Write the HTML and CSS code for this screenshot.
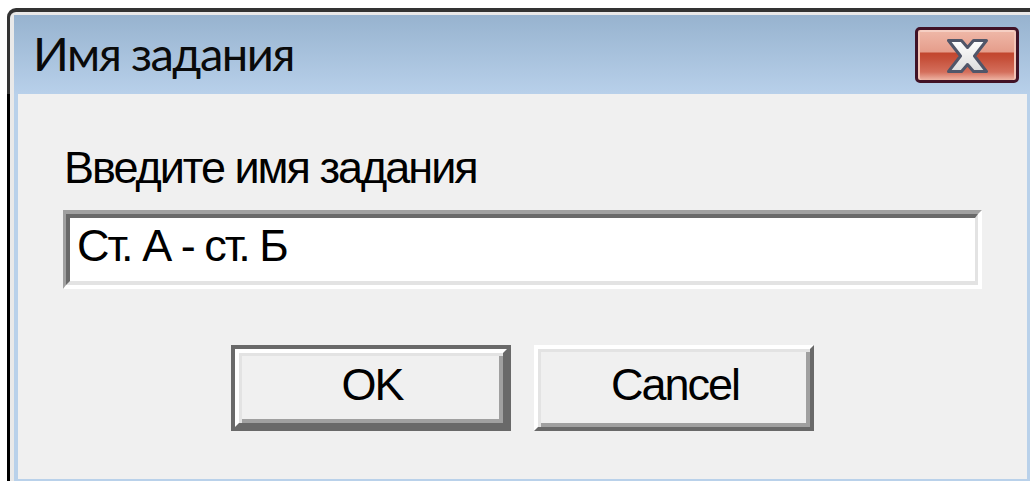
FILE: index.html
```html
<!DOCTYPE html>
<html lang="ru">
<head>
<meta charset="utf-8">
<title>Имя задания</title>
<link rel="stylesheet" href="styles.css">
</head>
<body>
<div class="window">
  <div class="frame">
    <div class="chrome">
      <div class="titlebar">
        <span class="title">Имя задания</span>
        <div class="close" role="button" aria-label="Закрыть">
          <svg class="close-x" width="41" height="34" viewBox="0 0 41 34">
            <defs>
              <linearGradient id="xfill" x1="0" y1="0" x2="0" y2="1">
                <stop offset="0" stop-color="#ffffff"/>
                <stop offset="1" stop-color="#dcdcdc"/>
              </linearGradient>
            </defs>
            <path d="M1.5 1.5 H14.5 L20.5 8.5 L26.5 1.5 H39.5 L27.5 17 L39.5 32.5 H26.5 L20.5 25.5 L14.5 32.5 H1.5 L13.5 17 Z" fill="url(#xfill)" stroke="#505669" stroke-width="3" stroke-linejoin="round"/>
          </svg>
        </div>
      </div>
      <div class="client">
        <div class="label">Введите имя задания</div>
        <div class="field">
          <div class="field-inner">Ст. А - ст. Б</div>
        </div>
        <div class="buttons">
          <div class="btn-default"><div class="btn">OK</div></div>
          <div class="btn">Cancel</div>
        </div>
      </div>
    </div>
  </div>
</div>
</body>
</html>
```
FILE: styles.css
```css
html, body {
  margin: 0;
  padding: 0;
  background: #ffffff;
  width: 1030px;
  height: 481px;
  overflow: hidden;
}

/* outer window frame: dark edge, then a pale line, then the blue chrome */
.window {
  box-sizing: border-box;
  margin: 8px 0 0 7px;
  width: 1023px;
  height: 473px;
  padding: 4px 0 0 3px;
  background: linear-gradient(#333333 0 86px, #000000 86px);
  border-top-left-radius: 9px;
  overflow: hidden;
}

.frame {
  box-sizing: border-box;
  height: 100%;
  padding: 3px 0 0 4px;
  background: #e9e9e9;
  border-top-left-radius: 6px;
}

.chrome {
  box-sizing: border-box;
  height: 100%;
  display: flex;
  flex-direction: column;
  background: #b9d1ea;
  border-top-left-radius: 3px;
}

.titlebar {
  flex: 0 0 79px;
  display: flex;
  align-items: flex-start;
  background: linear-gradient(#97b3cf, #b8d0ea);
  padding-left: 19px;
}

.title {
  margin-top: 15px;
  font-family: Lato, "Open Sans", sans-serif;
  font-size: 47px;
  line-height: 47px;
  letter-spacing: -1.5px;
  color: #0a0a0a;
  white-space: nowrap;
}

.close {
  box-sizing: border-box;
  width: 104px;
  height: 56px;
  margin: 12px 11px 0 auto;
  border: 3px solid #401226;
  border-radius: 5px;
  box-shadow: inset 2px 0 0 #f3c4b6, inset -2px 0 0 #f3c4b6, inset 0 2px 0 #f6cfc3;
  background: linear-gradient(#efb9a9 0%, #e59d8b 44%, #c2462e 46%, #c6503a 58%, #d46f5c 84%, #eeb4a4 100%);
  display: flex;
  align-items: center;
  justify-content: center;
}

.close-x {
  display: block;
  margin-top: 1px;
}

.client {
  flex: 1;
  margin: 0 3px 2px 4px;
  background: #f0f0f0;
  padding: 51px 45px 0 45px;
  font-family: "Liberation Sans", Arial, sans-serif;
  font-size: 45px;
  line-height: 46px;
  letter-spacing: -2px;
  color: #000000;
}

.label {
  padding-left: 1px;
  white-space: nowrap;
}

/* sunken edit box */
.field {
  box-sizing: border-box;
  margin-top: 19px;
  height: 79px;
  border-style: solid;
  border-width: 4px 4px 4px 3px;
  border-color: #a0a0a0 #ffffff #ffffff #a0a0a0;
}

.field-inner {
  box-sizing: border-box;
  height: 100%;
  padding: 5px 6px 0 7px;
  border-style: solid;
  border-width: 4px 3px 4px 4px;
  border-color: #696969 #e3e3e3 #e3e3e3 #696969;
  background: #ffffff;
  white-space: nowrap;
}

.buttons {
  margin-top: 56px;
  display: flex;
  justify-content: center;
  gap: 23px;
}

.btn-default {
  box-sizing: border-box;
  width: 280px;
  height: 86px;
  border: 4px solid #696969;
  display: flex;
}

.btn-default .btn {
  width: 100%;
  height: 100%;
}

.btn {
  box-sizing: border-box;
  width: 280px;
  height: 86px;
  border-style: solid;
  border-width: 4px;
  border-color: #ffffff #696969 #696969 #ffffff;
  box-shadow: inset 3px 3px 0 #e3e3e3, inset -4px -4px 0 #a0a0a0;
  background: #f0f0f0;
  display: flex;
  align-items: center;
  justify-content: center;
  padding: 0 0 6px 2px;
}
```
